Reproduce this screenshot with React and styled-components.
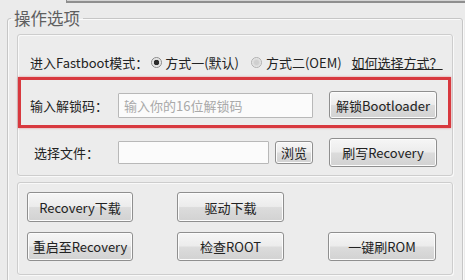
import React from 'react';
import styled, { createGlobalStyle } from 'styled-components';

const Global = createGlobalStyle`
  html, body {
    margin: 0;
    padding: 0;
    background: #ebebeb;
    font-family: "Noto Sans CJK SC", "Noto Sans", sans-serif;
    color: #222;
    overflow: hidden;
  }
`;

const Page = styled.div`
  width: 465px;
  height: 280px;
  overflow: hidden;
  background: #ebebeb;
`;

const TopEdge = styled.div`
  height: 3px;
  margin-left: 66px;
  box-sizing: border-box;
  border-left: 1px solid #8c8c8c;
  border-bottom: 2px solid #8f8f8f;
  background: #d4d4d4;
`;

const Group = styled.fieldset`
  margin: 5px 2px 0 7px;
  padding: 0 9px 10px 9px;
  border: 1px solid #c6c6c6;
  border-radius: 3px;
  box-shadow: inset 1px 1px 0 #fafafa, 1px 1px 0 #fafafa;
  min-width: 0;
`;

const Legend = styled.legend`
  margin-left: -6px;
  padding: 0 3px;
  font-size: 16.5px;
  line-height: 20px;
  color: #5f5f5f;
`;

const Panel = styled.div`
  margin-top: ${p => p.$top}px;
  padding: ${p => p.$pad};
  border: 1px solid #cdcdcd;
  border-radius: 3px;
  box-shadow: inset 1px 1px 0 #f9f9f9, 1px 1px 0 #f9f9f9;
  background: #ececec;
`;

const Row = styled.div`
  display: flex;
  align-items: center;
  height: ${p => p.$h}px;
  padding-left: ${p => p.$left}px;
  margin-top: ${p => p.$top || 0}px;
  font-size: 13px;
`;

const Text = styled.span`
  margin-left: ${p => p.$ml || 0}px;
  white-space: nowrap;
  font-size: 13px;
  color: #222;
`;

const Radio = styled.span`
  display: inline-block;
  box-sizing: border-box;
  width: 11px;
  height: 11px;
  margin-left: ${p => p.$ml || 0}px;
  border-radius: 50%;
  border: 1px solid ${p => (p.$on ? '#8a8a8a' : '#b0b0b0')};
  background: ${p =>
    p.$on
      ? 'radial-gradient(circle, #2b2b2b 0 2.5px, #dcdcdc 3px, #f4f4f4 5px)'
      : 'radial-gradient(circle, #cfcfcf 0 2px, #e4e4e4 4px, #f5f5f5 5px)'};
`;

const Link = styled.a`
  margin-left: ${p => p.$ml}px;
  font-size: 13px;
  color: #222;
  text-decoration: underline;
  white-space: nowrap;
`;

const RedBox = styled.div`
  display: flex;
  align-items: center;
  height: 40px;
  margin: 5px 1px 0 0;
  padding: 5px 0 0 9px;
  border: 3px solid #d8393f;
  box-shadow: 0 0 2px rgba(216, 57, 63, 0.55);
`;

const Label = styled.span`
  width: ${p => p.$w}px;
  flex: none;
  font-size: 13px;
  color: #222;
  white-space: nowrap;
`;

const Input = styled.input`
  box-sizing: border-box;
  width: ${p => p.$w}px;
  height: ${p => p.$h}px;
  margin: 0 ${p => p.$mr}px 0 0;
  padding: 0 5px;
  border: 1px solid #b8b8b8;
  border-radius: 1px;
  background: #fbfbfb;
  font-family: inherit;
  font-size: 13px;
  color: #333;
  outline: none;
  &::placeholder {
    color: #a9a9a9;
  }
`;

const Button = styled.button`
  box-sizing: border-box;
  flex: none;
  width: ${p => p.$w}px;
  height: ${p => p.$h}px;
  margin-left: ${p => p.$ml || 0}px;
  padding: 0;
  border: 1px solid #8f8f8f;
  border-radius: 3px;
  background: linear-gradient(#f6f6f6 0%, #ececec 48%, #dcdcdc 52%, #d2d2d2 100%);
  box-shadow: inset 0 0 0 1px #fcfcfc;
  font-family: inherit;
  font-size: 13px;
  color: #222;
  white-space: nowrap;
`;

const Grid = styled.div`
  display: grid;
  grid-template-columns: 106px 107px 108px;
  column-gap: 44px;
  row-gap: 10px;
  align-items: start;
`;

export default function App() {
  return (
    <Page>
      <Global />
      <TopEdge />
      <Group>
        <Legend>操作选项</Legend>
        <Panel $top={6} $pad="17px 0 8px 0">
          <Row $h={20} $left={12}>
            <Text>进入Fastboot模式：</Text>
            <Radio $on $ml={3} />
            <Text $ml={3}>方式一(默认)</Text>
            <Radio $ml={12} />
            <Text $ml={4}>方式二(OEM)</Text>
            <Link $ml={10}>如何选择方式？</Link>
          </Row>
          <RedBox>
            <Label $w={88}>输入解锁码：</Label>
            <Input $w={195} $h={25} $mr={16} placeholder="输入你的16位解锁码" />
            <Button $w={108} $h={28}>解锁Bootloader</Button>
          </RedBox>
          <Row $h={29} $left={16} $top={10}>
            <Label $w={84}>选择文件：</Label>
            <Input $w={151} $h={23} $mr={6} />
            <Button $w={38} $h={23}>浏览</Button>
            <Button $w={108} $h={29} $ml={16}>刷写Recovery</Button>
          </Row>
        </Panel>
        <Panel $top={6} $pad="9px 0 13px 9px">
          <Grid>
            <Button $w={106} $h={30}>Recovery下载</Button>
            <Button $w={107} $h={30}>驱动下载</Button>
            <span />
            <Button $w={106} $h={29}>重启至Recovery</Button>
            <Button $w={107} $h={29}>检查ROOT</Button>
            <Button $w={108} $h={29}>一键刷ROM</Button>
          </Grid>
        </Panel>
      </Group>
    </Page>
  );
}
